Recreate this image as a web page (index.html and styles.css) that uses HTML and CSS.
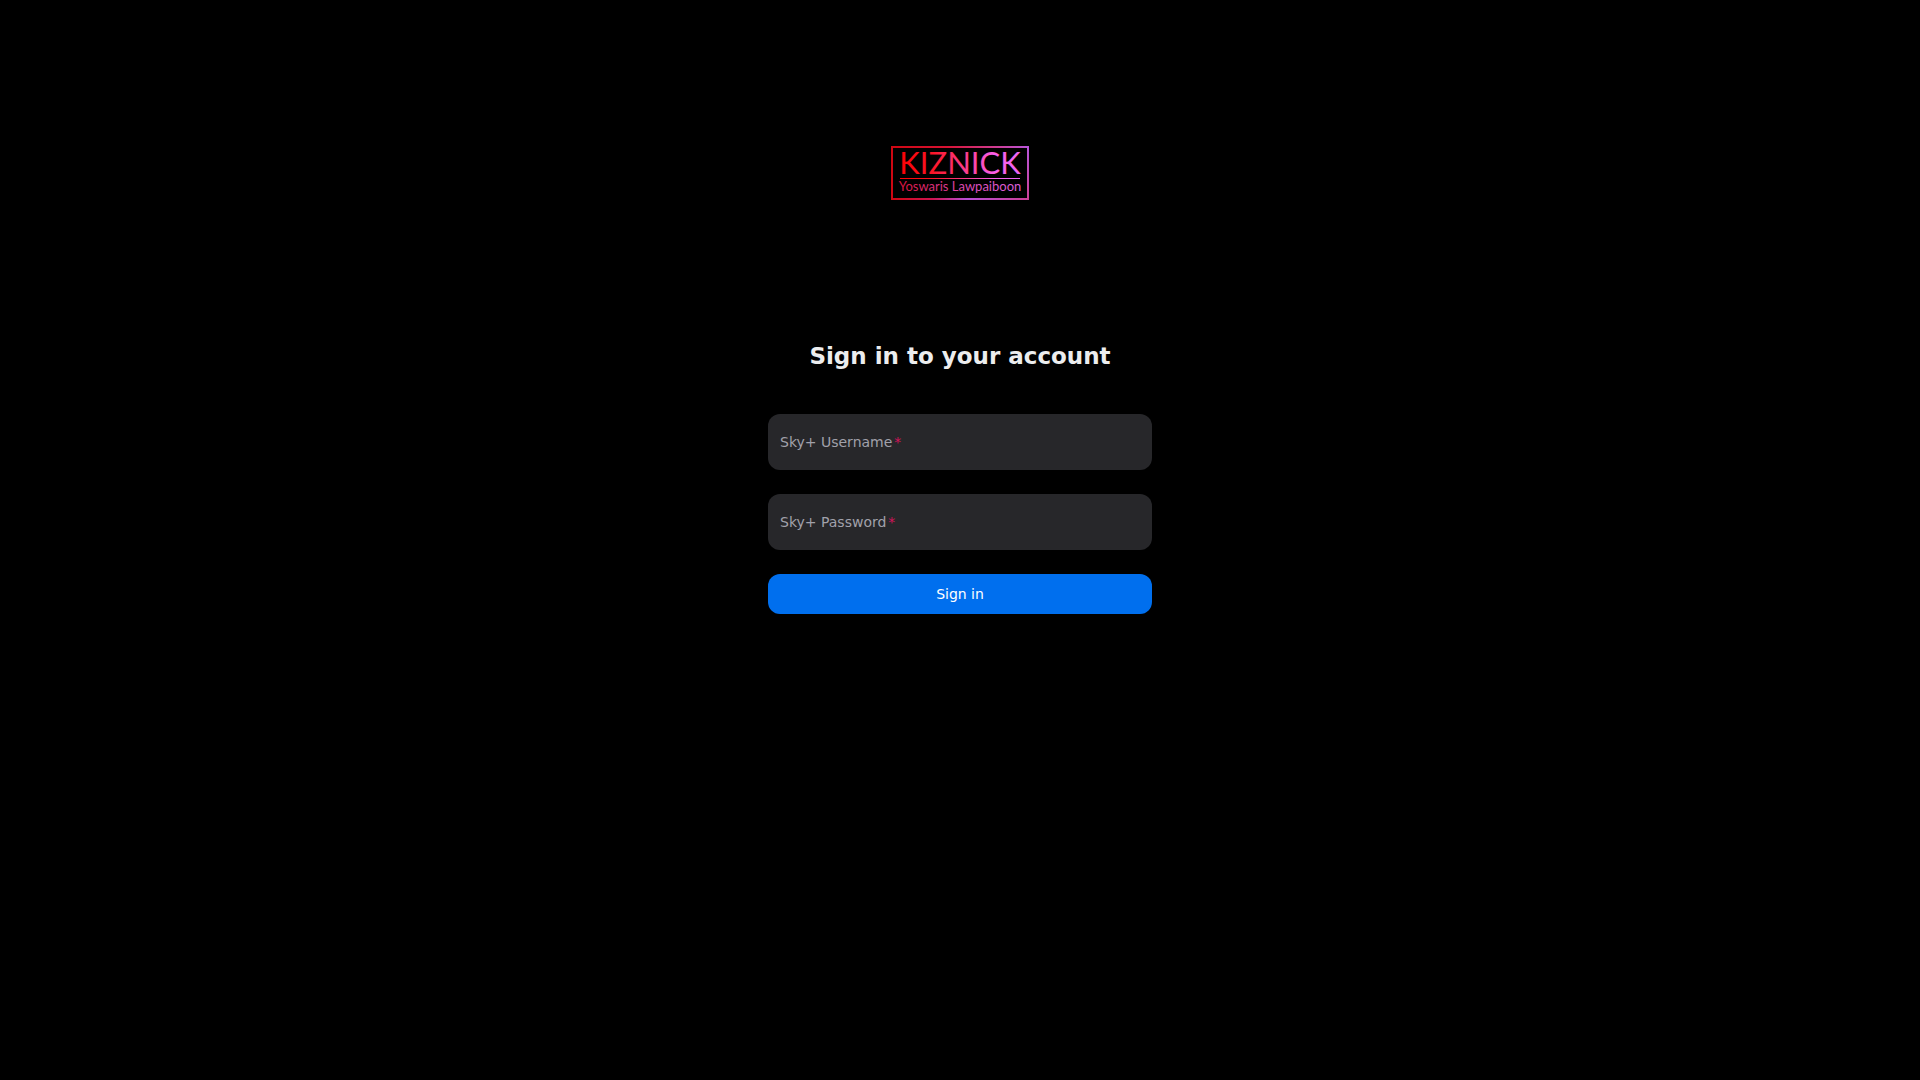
FILE: index.html
```html
<!DOCTYPE html>
<html lang="en">
<head>
<meta charset="utf-8">
<meta name="viewport" content="width=device-width, initial-scale=1">
<title>Sign in</title>
<link rel="stylesheet" href="styles.css">
</head>
<body>
<main class="page">
  <svg class="logo" viewBox="0 0 138 56" role="img" aria-label="Kiznick, Yoswaris Lawpaiboon">
    <defs>
      <linearGradient id="brand" gradientUnits="userSpaceOnUse" x1="0" y1="0" x2="138" y2="0">
        <stop offset="0.1" stop-color="#fb0409"/>
        <stop offset="0.3" stop-color="#fb1525"/>
        <stop offset="0.75" stop-color="#f95fe9"/>
        <stop offset="1" stop-color="#e668fa"/>
      </linearGradient>
      <linearGradient id="small" gradientUnits="userSpaceOnUse" x1="0" y1="0" x2="138" y2="0">
        <stop offset="0.05" stop-color="#d81038"/>
        <stop offset="0.6" stop-color="#dc4fc0"/>
        <stop offset="1" stop-color="#d964e0"/>
      </linearGradient>
      <linearGradient id="frame-top" gradientUnits="userSpaceOnUse" x1="0" y1="0" x2="138" y2="0">
        <stop offset="0" stop-color="#cf0712"/>
        <stop offset="0.4" stop-color="#d81233"/>
        <stop offset="0.75" stop-color="#cf3b90"/>
        <stop offset="1" stop-color="#b856dc"/>
      </linearGradient>
      <linearGradient id="frame-bottom" gradientUnits="userSpaceOnUse" x1="0" y1="0" x2="138" y2="0">
        <stop offset="0" stop-color="#cf0712"/>
        <stop offset="0.3" stop-color="#cf1450"/>
        <stop offset="0.55" stop-color="#b94fd6"/>
        <stop offset="1" stop-color="#cc3f96"/>
      </linearGradient>
      <linearGradient id="frame-side" gradientUnits="userSpaceOnUse" x1="0" y1="0" x2="0" y2="54">
        <stop offset="0" stop-color="#b856dc"/>
        <stop offset="1" stop-color="#cc3f96"/>
      </linearGradient>
    </defs>
    <rect width="2" height="54" fill="#cf0712"/>
    <rect x="136" width="2" height="54" fill="url(#frame-side)"/>
    <rect width="138" height="2" fill="url(#frame-top)"/>
    <rect y="52" width="138" height="2" fill="url(#frame-bottom)"/>
    <rect x="9" y="32" width="120" height="1" fill="url(#brand)"/>
    <text class="logo-name" x="69" y="28" text-anchor="middle" fill="url(#brand)" stroke="url(#brand)">KIZNICK</text>
    <text class="logo-owner" x="69" y="45" text-anchor="middle" fill="url(#small)">Yoswaris Lawpaiboon</text>
  </svg>
  <h1 class="title">Sign in to your account</h1>
  <form class="form">
    <div class="field">
      <label class="label" for="username">Sky+ Username<span class="required">*</span></label>
      <input class="input" id="username" type="text" required>
    </div>
    <div class="field">
      <label class="label" for="password">Sky+ Password<span class="required">*</span></label>
      <input class="input" id="password" type="password" required>
    </div>
    <button class="submit" type="submit">Sign in</button>
  </form>
</main>
</body>
</html>
```
FILE: styles.css
```css
* {
  box-sizing: border-box;
}

body {
  margin: 0;
  background: #000;
  color: #ecedee;
  font-family: "DejaVu Sans", sans-serif;
}

.page {
  display: flex;
  flex-direction: column;
  align-items: center;
  min-height: 100vh;
  padding: 146px 24px 48px;
}

.logo {
  display: block;
  width: 138px;
  height: 56px;
  overflow: visible;
}

.logo-name {
  font: 400 31px Lato, sans-serif;
  stroke-width: 0;
}

.logo-owner {
  font: 400 13px Lato, sans-serif;
}

.title {
  margin: 136px 0 40px;
  font-size: 23px;
  line-height: 36px;
  font-weight: 700;
  text-align: center;
}

.form {
  display: flex;
  flex-direction: column;
  gap: 24px;
  width: 100%;
  max-width: 384px;
}

.field {
  display: grid;
  align-items: center;
}

.label,
.input {
  grid-area: 1 / 1;
}

.label {
  z-index: 1;
  justify-self: start;
  padding-left: 12px;
  color: #a1a1aa;
  font-size: 14px;
  line-height: 20px;
  cursor: text;
}

.required {
  margin-left: 2px;
  color: #d11459;
}

.input {
  width: 100%;
  height: 56px;
  padding: 20px 12px 4px;
  border: 0;
  border-radius: 12px;
  background: #27272a;
  color: #ecedee;
  font: inherit;
  font-size: 14px;
}

.submit {
  height: 40px;
  border: 0;
  border-radius: 12px;
  background: #006fee;
  color: #fff;
  font: inherit;
  font-size: 14px;
  line-height: 20px;
  cursor: pointer;
}
```
